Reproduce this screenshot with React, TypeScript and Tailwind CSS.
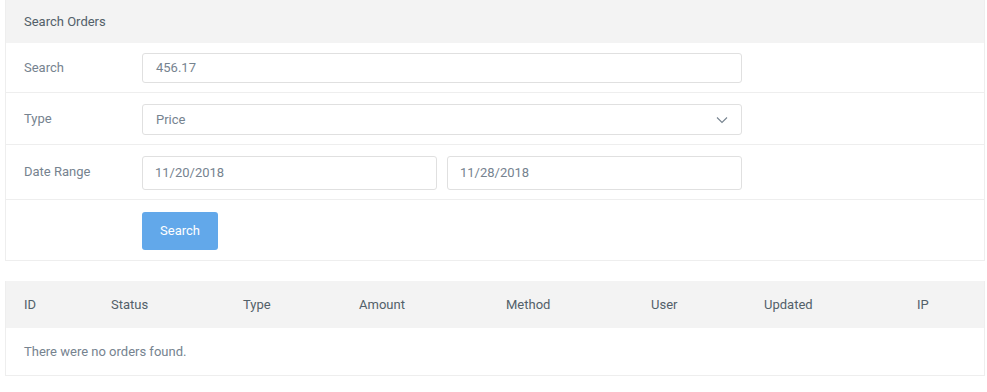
import React from "react";

const font = { fontFamily: "Roboto, 'Liberation Sans', sans-serif" };

function Row({ label, children, h, last }: { label?: string; children: React.ReactNode; h: string; last?: boolean }) {
  return (
    <div className={`flex items-center ${h} ${last ? "" : "border-b border-[#eeeeee]"}`}>
      <div className="w-[136px] pl-[18px] text-[13px] text-[#76838f]">{label}</div>
      <div className="flex-1">{children}</div>
    </div>
  );
}

export default function App() {
  const cols = ["ID", "Status", "Type", "Amount", "Method", "User", "Updated", "IP"];
  return (
    <div className="w-[987px] h-[392px] bg-white" style={font}>
      <div className="ml-[5px] w-[980px] border-x border-b border-[#eeeeee]">
        <div className="h-[43px] bg-[#f3f3f3] flex items-center pl-[18px] text-[13px] text-[#526069]">Search Orders</div>
        <Row label="Search" h="h-[50px]">
          <div className="w-[600px] h-[30px] border border-[#e0e0e0] rounded-[3px] flex items-center pl-[13px] text-[13px] text-[#76838f]">456.17</div>
        </Row>
        <Row label="Type" h="h-[52px]">
          <div className="mt-[2px] w-[600px] h-[31px] border border-[#e0e0e0] rounded-[3px] flex items-center justify-between pl-[13px] pr-[13px] text-[13px] text-[#76838f]">
            <span>Price</span>
            <svg width="12" height="8" viewBox="0 0 12 8" fill="none">
              <path d="M1 1.5 L6 6.5 L11 1.5" stroke="#76838f" strokeWidth="1.1" />
            </svg>
          </div>
        </Row>
        <Row label="Date Range" h="h-[55px]">
          <div className="mt-[2px] flex gap-[10px]">
            <div className="w-[295px] h-[34px] border border-[#e0e0e0] rounded-[3px] flex items-center pl-[12px] text-[13px] text-[#76838f]">11/20/2018</div>
            <div className="w-[295px] h-[34px] border border-[#e0e0e0] rounded-[3px] flex items-center pl-[12px] text-[13px] text-[#76838f]">11/28/2018</div>
          </div>
        </Row>
        <Row h="h-[60px]" last>
          <div className="mt-[2px] w-[76px] h-[38px] bg-[#62a8ea] rounded-[3px] flex items-center justify-center text-[13px] text-white">Search</div>
        </Row>
      </div>
      <div className="ml-[5px] mt-[20px] w-[980px] border-x border-b border-[#eeeeee]">
        <div className="grid grid-cols-[87px_132px_116px_147px_145px_113px_153px_1fr] h-[47px] bg-[#f3f3f3] items-center text-[13px] text-[#526069]">
          {cols.map((c) => (
            <div key={c} className="pl-[18px]">{c}</div>
          ))}
        </div>
        <div className="h-[47px] flex items-center pl-[18px] text-[13px] text-[#76838f]">There were no orders found.</div>
      </div>
    </div>
  );
}
